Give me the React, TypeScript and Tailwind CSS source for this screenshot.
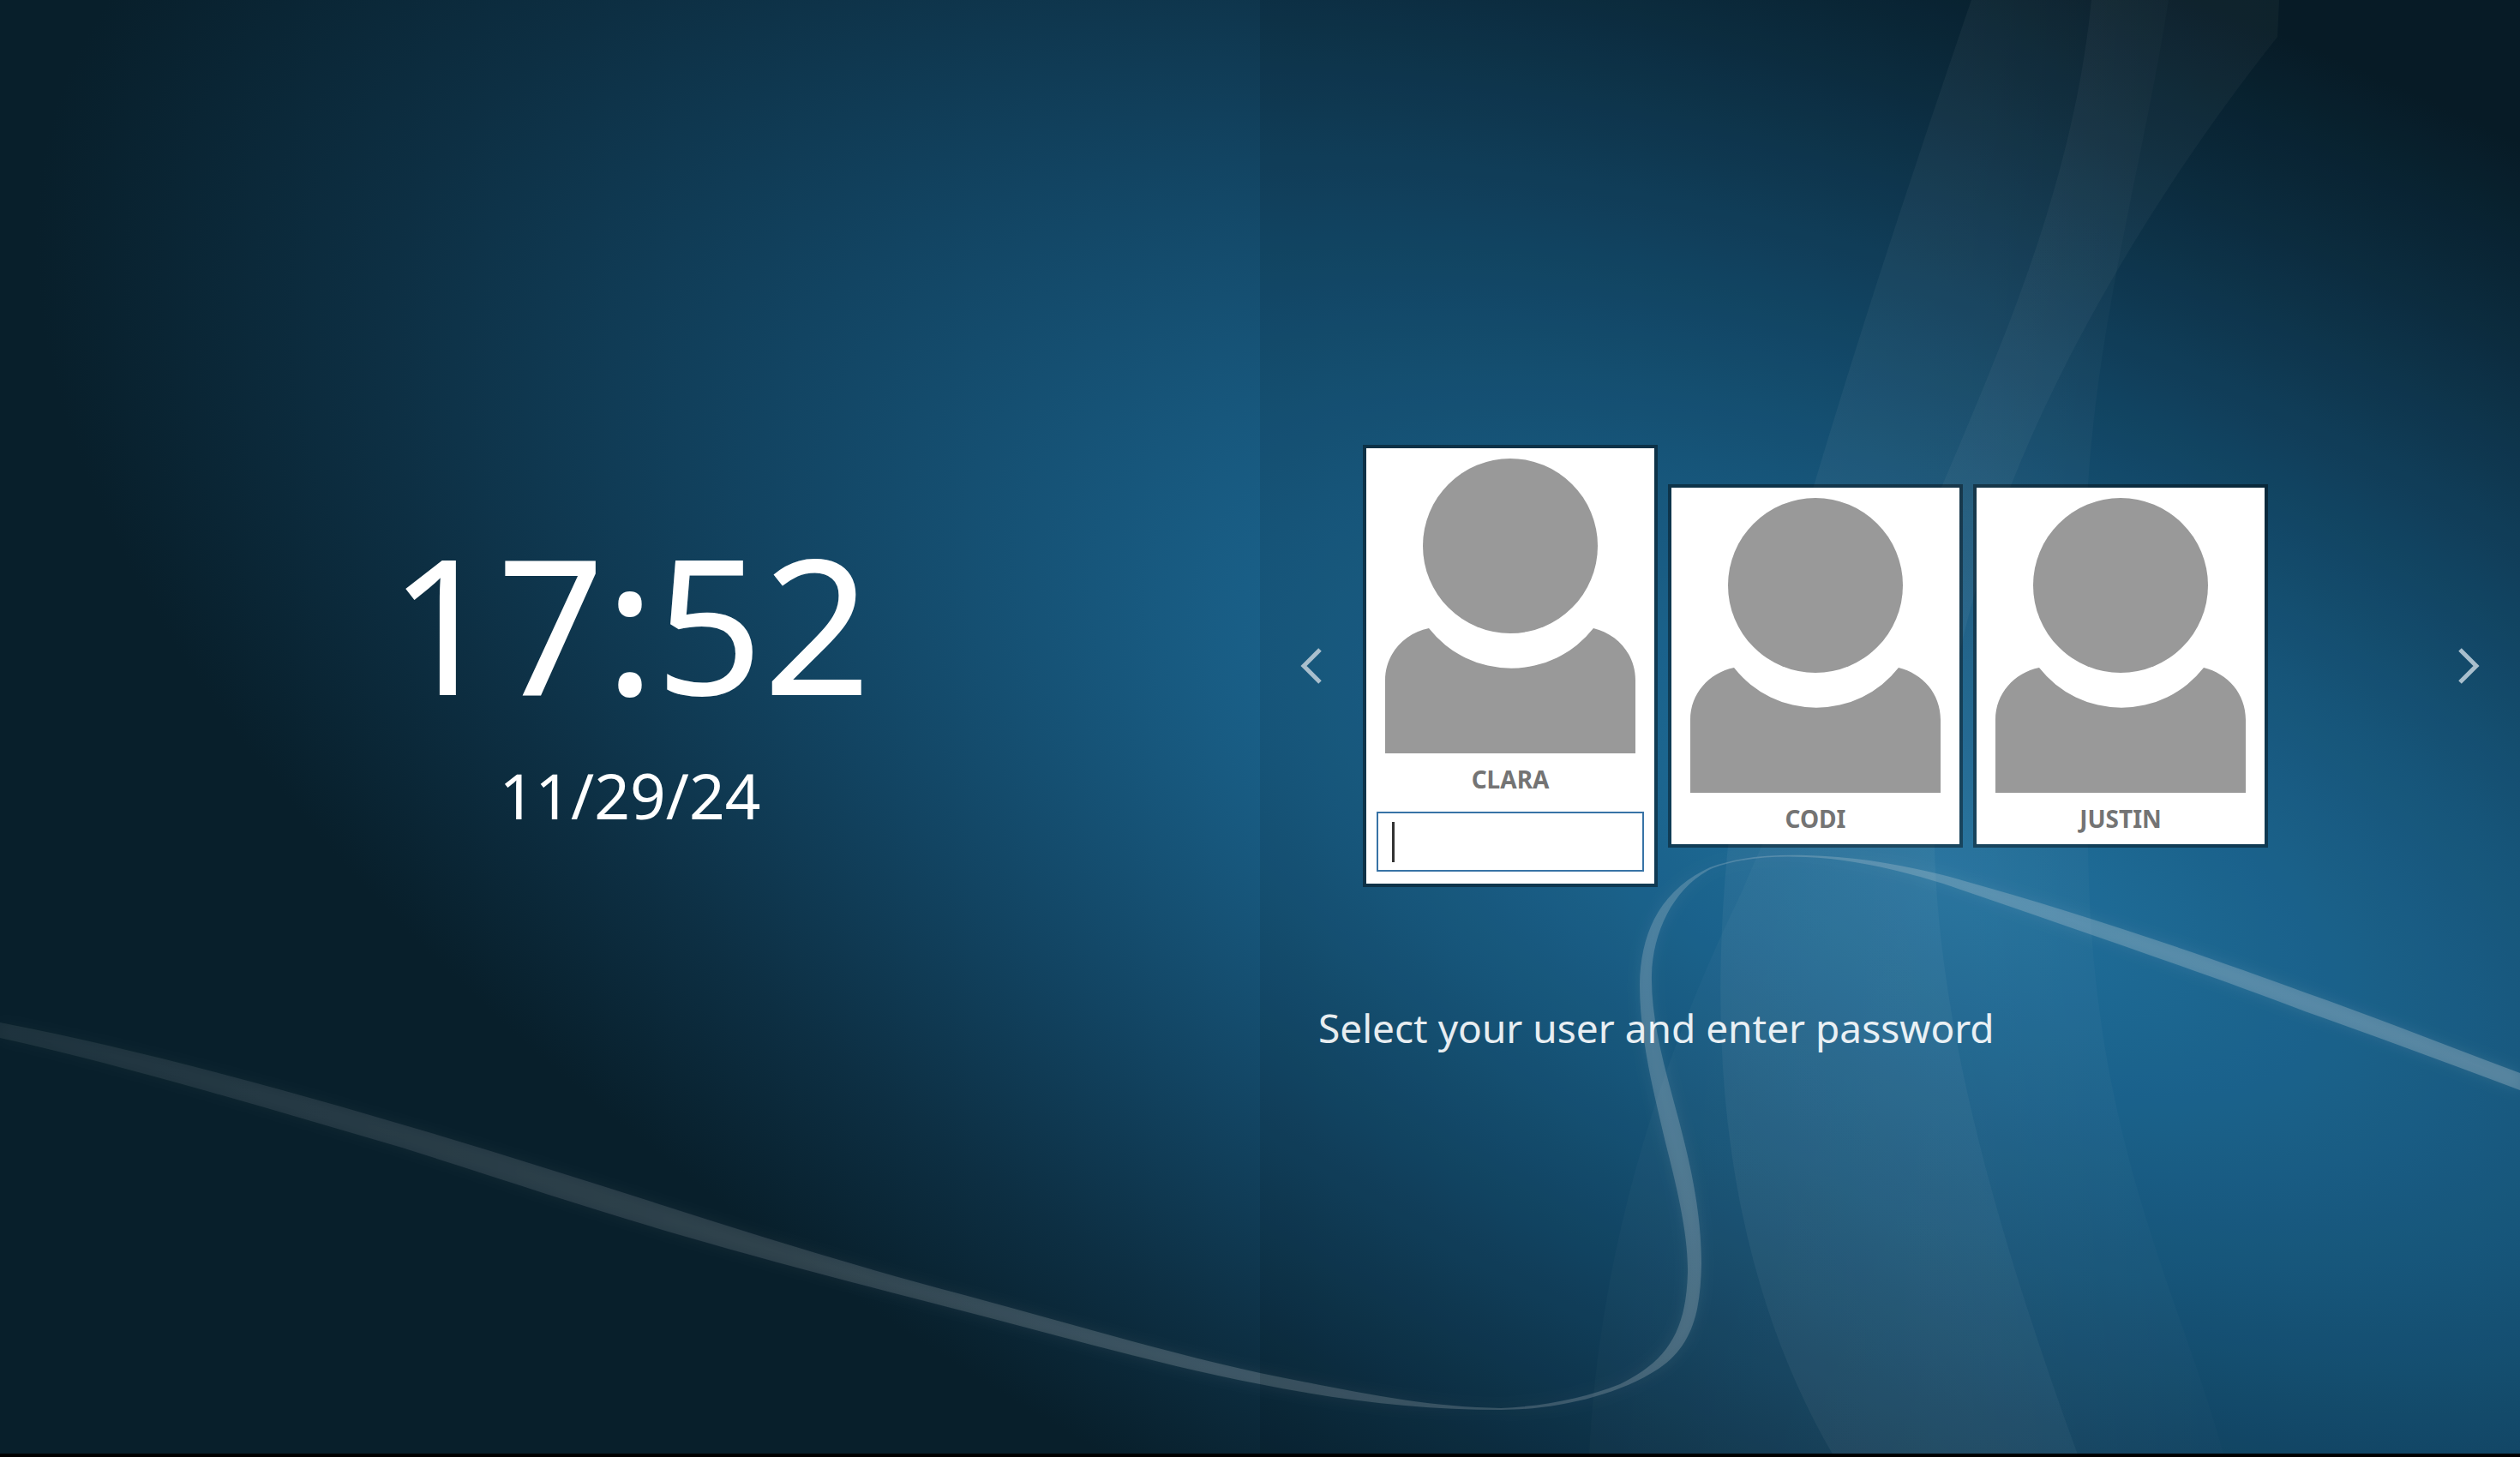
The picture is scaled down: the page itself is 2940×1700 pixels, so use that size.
type User = { name: string; selected?: boolean };

const users: User[] = [
  { name: "CLARA", selected: true },
  { name: "CODI" },
  { name: "JUSTIN" },
];

const swoosh =
  "M0 1193 C150 1222 310 1265 469 1312 C690 1376 900 1452 1125 1511 C1240 1542 1360 1578 1470 1602 " +
  "C1570 1622 1660 1642 1751 1643 C1800 1641 1850 1631 1890 1615 C1940 1590 1967 1560 1969 1485 " +
  "C1970 1440 1955 1380 1943 1333 C1932 1285 1913 1215 1913 1149 C1914 1090 1935 1040 1995 1012 " +
  "C2030 999 2070 997 2107 998 C2160 999 2215 1008 2267 1021 C2400 1057 2560 1110 2689 1158 " +
  "C2780 1190 2860 1222 2940 1252 L2940 1272 C2860 1242 2780 1212 2689 1180 C2560 1131 2400 1077 2267 1031 " +
  "C2215 1015 2160 1002 2107 1000 C2070 998 2030 1001 1998 1013 C1955 1033 1928 1085 1927 1138 " +
  "C1926 1190 1942 1245 1957 1301 C1970 1350 1985 1410 1985 1474 C1984 1530 1975 1570 1935 1597 " +
  "C1885 1630 1810 1645 1751 1645 C1660 1645 1570 1635 1470 1615 C1360 1594 1240 1560 1125 1530 " +
  "C1020 1503 900 1472 797 1442 C690 1411 580 1374 469 1339 C310 1293 150 1244 0 1211 Z";

function Wallpaper() {
  return (
    <svg
      aria-hidden="true"
      className="absolute inset-0 h-full w-full"
      viewBox="0 0 2940 1700"
      preserveAspectRatio="none"
    >
      <defs>
        <radialGradient
          id="sky"
          gradientUnits="userSpaceOnUse"
          cx="0"
          cy="0"
          r="1"
          gradientTransform="translate(2270 1015) rotate(23) scale(2380 1050)"
        >
          <stop offset="0" stopColor="#257dae" />
          <stop offset="0.2" stopColor="#1e6d9b" />
          <stop offset="0.37" stopColor="#195e86" />
          <stop offset="0.62" stopColor="#124462" />
          <stop offset="0.82" stopColor="#0d2f43" />
          <stop offset="1" stopColor="#081f2b" />
        </radialGradient>
        <linearGradient id="line" x1="0" y1="0" x2="1" y2="0">
          <stop offset="0" stopColor="#ffffff" stopOpacity="0.07" />
          <stop offset="0.3" stopColor="#ffffff" stopOpacity="0.12" />
          <stop offset="0.65" stopColor="#ffffff" stopOpacity="0.21" />
          <stop offset="1" stopColor="#ffffff" stopOpacity="0.25" />
        </linearGradient>
        <linearGradient id="bandA" gradientUnits="userSpaceOnUse" x1="2000" y1="0" x2="2600" y2="0">
          <stop offset="0" stopColor="#ffffff" stopOpacity="0.055" />
          <stop offset="0.5" stopColor="#ffffff" stopOpacity="0.045" />
          <stop offset="1" stopColor="#ffffff" stopOpacity="0.01" />
        </linearGradient>
        <linearGradient id="bandB" gradientUnits="userSpaceOnUse" x1="1854" y1="0" x2="2659" y2="0">
          <stop offset="0" stopColor="#ffffff" stopOpacity="0.02" />
          <stop offset="0.5" stopColor="#ffffff" stopOpacity="0.045" />
          <stop offset="1" stopColor="#ffffff" stopOpacity="0.035" />
        </linearGradient>
        <filter id="glow" x="-5%" y="-5%" width="110%" height="110%">
          <feGaussianBlur stdDeviation="8" />
        </filter>
      </defs>
      <rect width="2940" height="1700" fill="url(#sky)" />
      <path
        d="M2300 0 C2235 190 2175 370 2117 564 C2060 740 2018 880 2009 1084 C1998 1320 2040 1530 2140 1700 L2595 1700 C2540 1500 2440 1330 2436 989 C2425 780 2430 640 2436 564 C2450 360 2500 190 2530 0 Z"
        fill="url(#bandA)"
      />
      <path
        d="M2440 0 C2420 200 2350 370 2267 564 C2180 760 2090 900 2032 1041 C1930 1250 1865 1470 1854 1700 L2425 1700 C2330 1440 2262 1200 2257 989 C2262 850 2290 710 2347 564 C2420 380 2540 190 2657 43 L2659 0 Z"
        fill="url(#bandB)"
      />
      <path d={swoosh} fill="url(#line)" filter="url(#glow)" fillOpacity="0.4" />
      <path d={swoosh} fill="url(#line)" />
    </svg>
  );
}

function Avatar() {
  return (
    <svg aria-hidden="true" viewBox="0 0 336 356" className="block w-full" fill="#999999">
      <circle cx="168" cy="114" r="102" />
      <path d="M22 357 V271 C22 240 44 216 73 210 A122 122 0 0 0 265 210 C293 217 314 240 314 271 V357 Z" />
    </svg>
  );
}

function UserCard({ name, selected }: User) {
  return (
    <li className="w-[344px] border-4 border-black/40 bg-white bg-clip-padding">
      <button type="button" className="block w-full">
        <Avatar />
        <span className="block text-center text-[28px] leading-[60px] font-bold text-[#747474]">{name}</span>
      </button>
      {selected && (
        <div className="relative mx-3 mt-2 mb-[14px]">
          <input
            type="password"
            aria-label={`Password for ${name}`}
            className="block h-[70px] w-full border-2 border-[#3873a6] bg-white px-4 text-[28px] text-[#333333] outline-none"
          />
          <span aria-hidden="true" className="absolute top-3 left-[18px] h-[47px] w-[3px] bg-[#333333]" />
        </div>
      )}
    </li>
  );
}

function Arrow({ label, points }: { label: string; points: string }) {
  return (
    <button type="button" aria-label={label} className="flex w-[120px] shrink-0 justify-center">
      <svg viewBox="0 0 28 46" className="h-[46px] w-7" fill="none" stroke="#a9bfcd" strokeWidth="5">
        <polyline points={points} />
      </svg>
    </button>
  );
}

export default function App() {
  return (
    <div className="relative flex min-h-screen flex-col font-['Noto_Sans',sans-serif] text-white">
      <Wallpaper />
      <main className="relative grid flex-1 grid-cols-2">
        <section className="flex flex-col items-center justify-center pb-[140px]">
          <time className="text-[220px] leading-[300px]">17:52</time>
          <time className="text-[73px] leading-[104px]">11/29/24</time>
        </section>
        <section className="grid grid-rows-[1fr_auto_1fr] bg-black/10 pb-[142px]">
          <div className="row-start-2 flex items-center">
            <Arrow label="Previous user" points="24,4 5,23 24,42" />
            <ul className="flex flex-1 items-center gap-3">
              {users.map((u) => (
                <UserCard key={u.name} {...u} />
              ))}
            </ul>
            <Arrow label="Next user" points="4,4 23,23 4,42" />
          </div>
          <p className="row-start-3 mt-[132px] h-0 pl-[68px] text-[46px] leading-[64px] whitespace-nowrap text-white/90">
            Select your user and enter password
          </p>
        </section>
      </main>
      <footer className="relative h-1 bg-black" />
    </div>
  );
}
